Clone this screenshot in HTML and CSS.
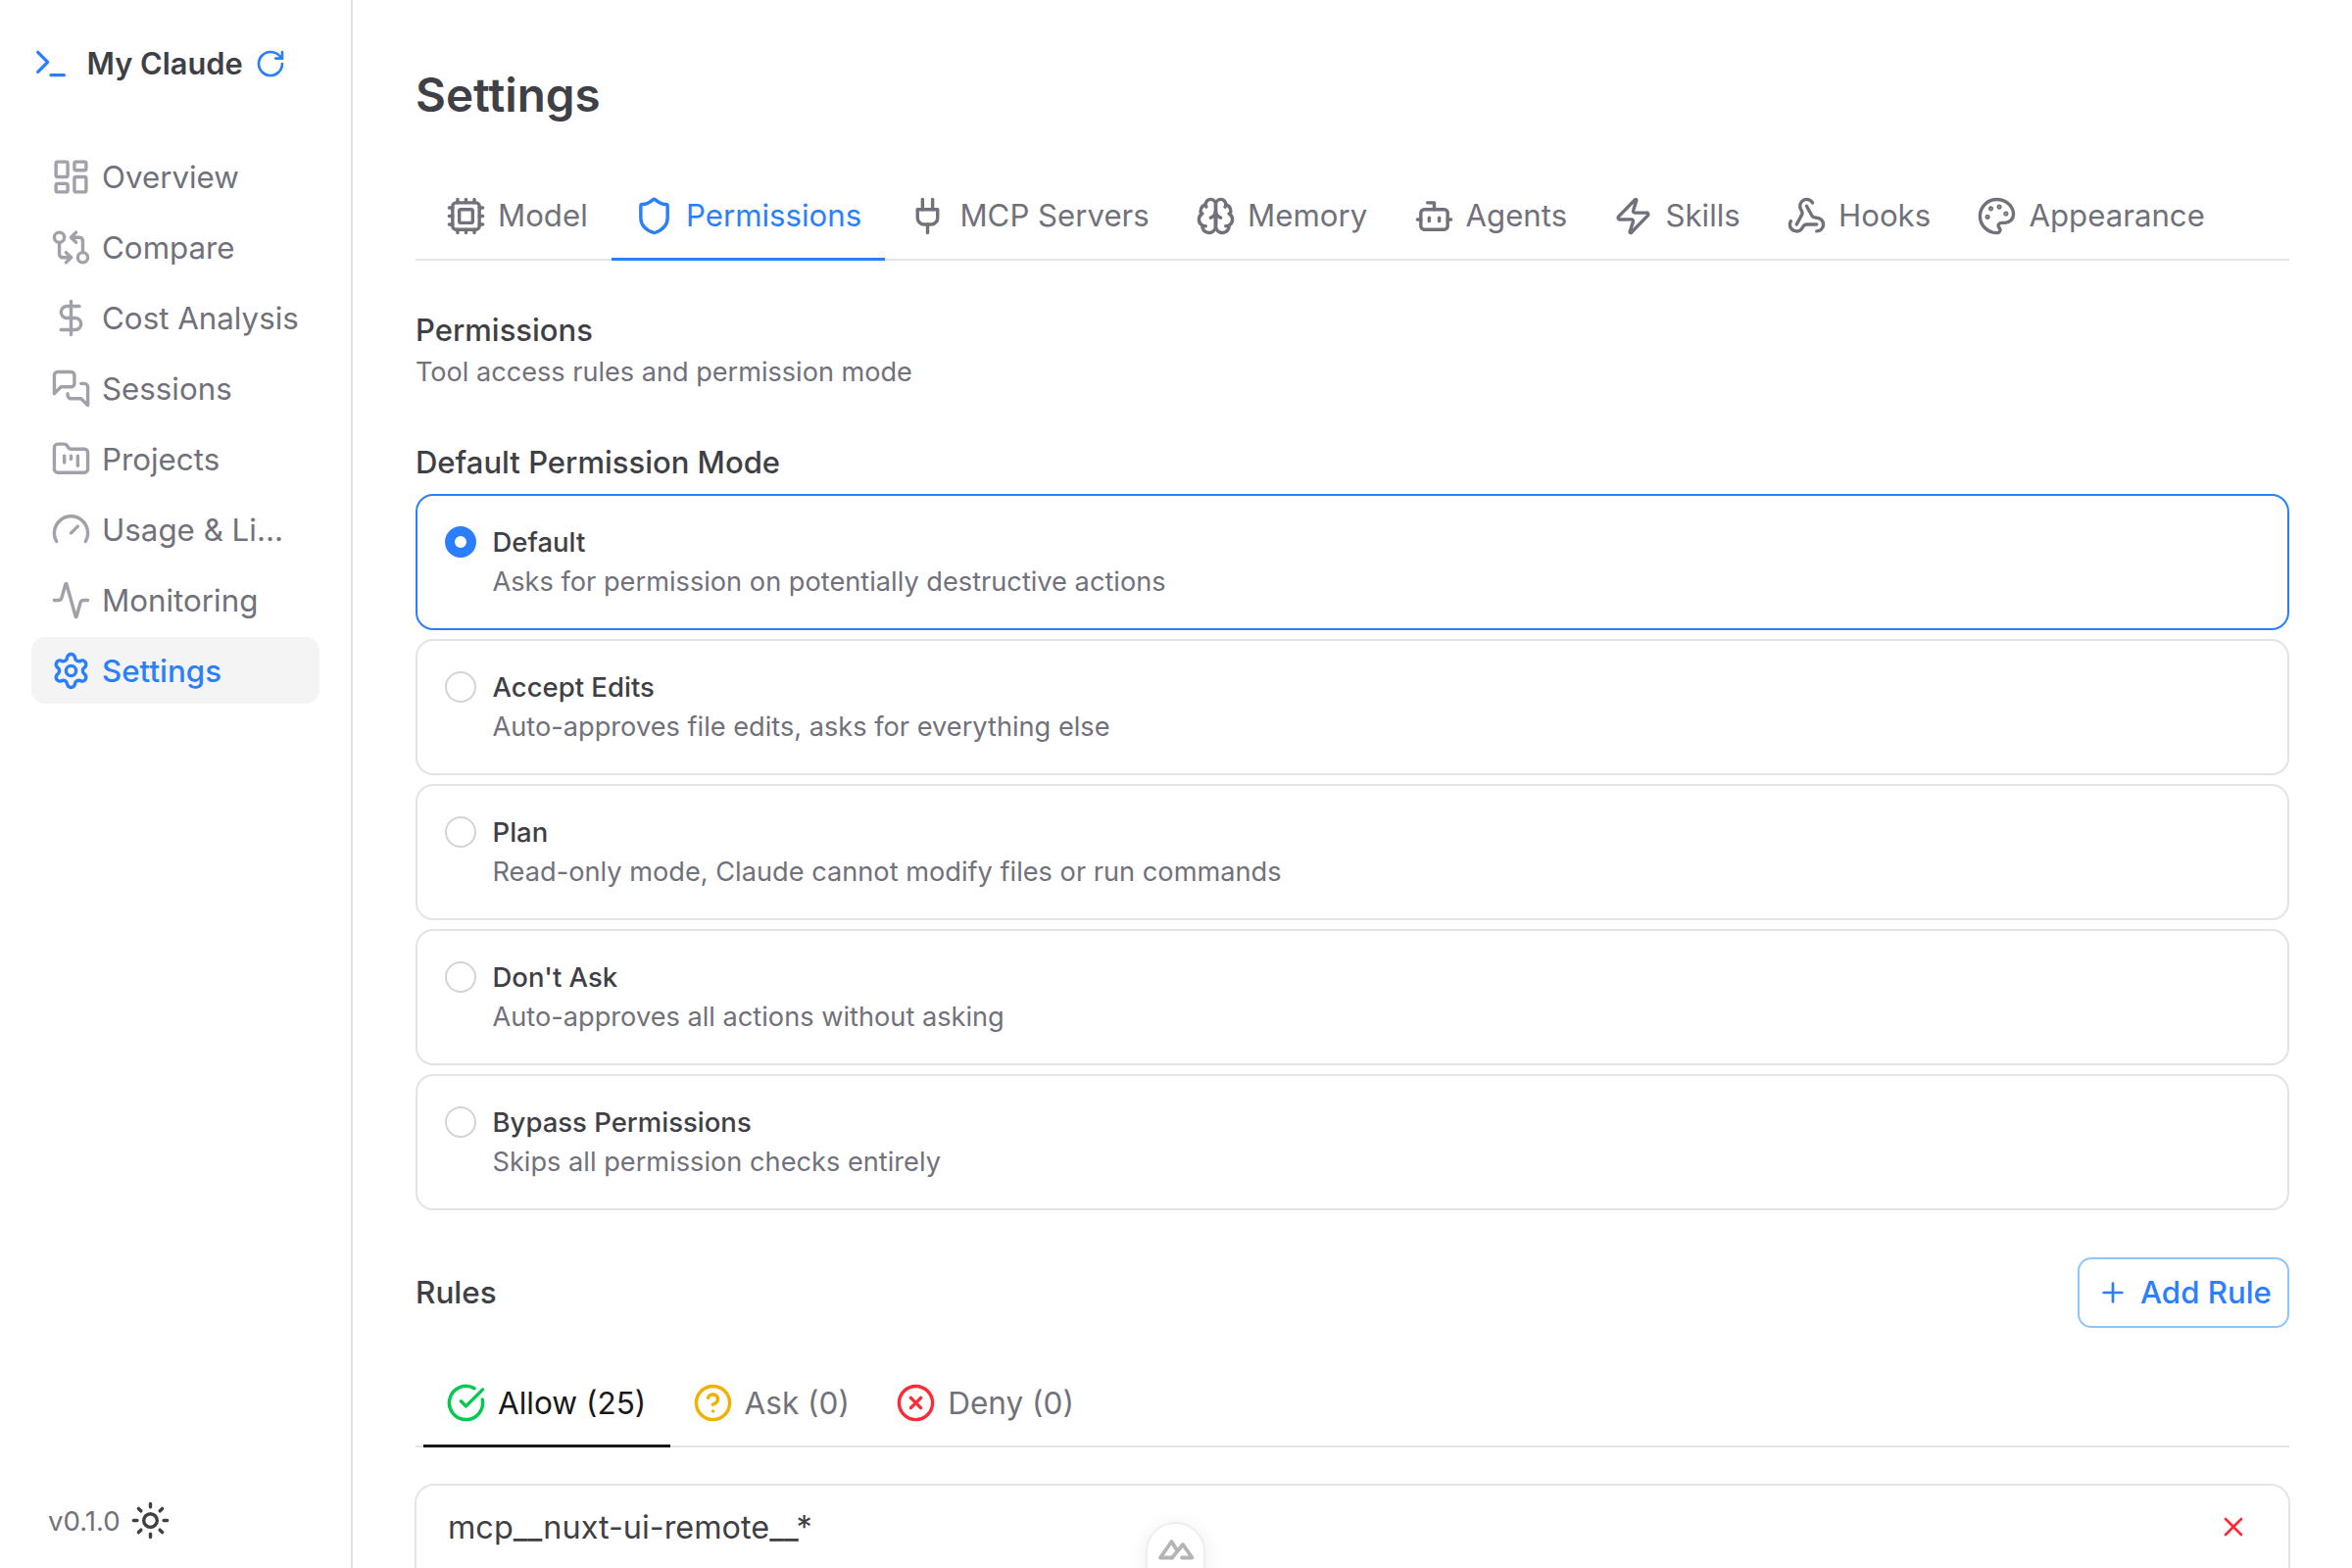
FILE: index.html
```html
<!DOCTYPE html>
<html lang="en">
<head>
<meta charset="utf-8">
<title>My Claude – Settings</title>
<link rel="stylesheet" href="styles.css">
</head>
<body>
<svg class="sprite" xmlns="http://www.w3.org/2000/svg">
  <symbol id="i-terminal" viewBox="0 0 24 24"><path d="M12 19h8"/><path d="m4 17 6-6-6-6"/></symbol>
  <symbol id="i-refresh" viewBox="0 0 24 24"><path d="M21 12a9 9 0 1 1-9-9c2.52 0 4.93 1 6.74 2.74L21 8"/><path d="M21 3v5h-5"/></symbol>
  <symbol id="i-overview" viewBox="0 0 24 24"><rect x="3" y="3" width="7" height="9" rx="1"/><rect x="14" y="3" width="7" height="5" rx="1"/><rect x="14" y="12" width="7" height="9" rx="1"/><rect x="3" y="16" width="7" height="5" rx="1"/></symbol>
  <symbol id="i-compare" viewBox="0 0 24 24"><circle cx="5" cy="6" r="3"/><path d="M12 6h5a2 2 0 0 1 2 2v7"/><path d="m15 9-3-3 3-3"/><circle cx="19" cy="18" r="3"/><path d="M12 18H7a2 2 0 0 1-2-2V9"/><path d="m9 15 3 3-3 3"/></symbol>
  <symbol id="i-dollar" viewBox="0 0 24 24"><line x1="12" x2="12" y1="2" y2="22"/><path d="M17 5H9.5a3.5 3.5 0 0 0 0 7h5a3.5 3.5 0 0 1 0 7H6"/></symbol>
  <symbol id="i-sessions" viewBox="0 0 24 24"><path d="M14 9a2 2 0 0 1-2 2H6l-4 4V4a2 2 0 0 1 2-2h8a2 2 0 0 1 2 2z"/><path d="M18 9h2a2 2 0 0 1 2 2v11l-4-4h-6a2 2 0 0 1-2-2v-1"/></symbol>
  <symbol id="i-projects" viewBox="0 0 24 24"><path d="M4 20h16a2 2 0 0 0 2-2V8a2 2 0 0 0-2-2h-7.93a2 2 0 0 1-1.66-.9l-.82-1.2A2 2 0 0 0 7.93 3H4a2 2 0 0 0-2 2v13c0 1.1.9 2 2 2Z"/><path d="M8 10v4"/><path d="M12 10v2"/><path d="M16 10v6"/></symbol>
  <symbol id="i-gauge" viewBox="0 0 24 24"><path d="m12 14 4-4"/><path d="M3.34 19a10 10 0 1 1 17.32 0"/></symbol>
  <symbol id="i-activity" viewBox="0 0 24 24"><path d="M22 12h-2.48a2 2 0 0 0-1.93 1.46l-2.35 8.36a.25.25 0 0 1-.48 0L9.24 2.18a.25.25 0 0 0-.48 0l-2.35 8.36A2 2 0 0 1 4.49 12H2"/></symbol>
  <symbol id="i-settings" viewBox="0 0 24 24"><path d="M9.671 4.136a2.34 2.34 0 0 1 4.659 0 2.34 2.34 0 0 0 3.319 1.915 2.34 2.34 0 0 1 2.33 4.033 2.34 2.34 0 0 0 0 3.831 2.34 2.34 0 0 1-2.33 4.033 2.34 2.34 0 0 0-3.319 1.915 2.34 2.34 0 0 1-4.659 0 2.34 2.34 0 0 0-3.32-1.915 2.34 2.34 0 0 1-2.33-4.033 2.34 2.34 0 0 0 0-3.831A2.34 2.34 0 0 1 6.35 6.051a2.34 2.34 0 0 0 3.319-1.915"/><circle cx="12" cy="12" r="3"/></symbol>
  <symbol id="i-sun" viewBox="0 0 24 24"><circle cx="12" cy="12" r="4"/><path d="M12 2v2"/><path d="M12 20v2"/><path d="m4.93 4.93 1.41 1.41"/><path d="m17.66 17.66 1.41 1.41"/><path d="M2 12h2"/><path d="M20 12h2"/><path d="m6.34 17.66-1.41 1.41"/><path d="m19.07 4.93-1.41 1.41"/></symbol>
  <symbol id="i-cpu" viewBox="0 0 24 24"><path d="M12 20v2"/><path d="M12 2v2"/><path d="M17 20v2"/><path d="M17 2v2"/><path d="M2 12h2"/><path d="M2 17h2"/><path d="M2 7h2"/><path d="M20 12h2"/><path d="M20 17h2"/><path d="M20 7h2"/><path d="M7 20v2"/><path d="M7 2v2"/><rect x="4" y="4" width="16" height="16" rx="2"/><rect x="8" y="8" width="8" height="8" rx="1"/></symbol>
  <symbol id="i-shield" viewBox="0 0 24 24"><path d="M20 13c0 5-3.5 7.5-7.66 8.95a1 1 0 0 1-.67-.01C7.5 20.5 4 18 4 13V6a1 1 0 0 1 1-1c2 0 4.5-1.2 6.24-2.72a1.17 1.17 0 0 1 1.52 0C14.51 3.81 17 5 19 5a1 1 0 0 1 1 1z"/></symbol>
  <symbol id="i-plug" viewBox="0 0 24 24"><path d="M12 22v-5"/><path d="M9 8V2"/><path d="M15 8V2"/><path d="M18 8v5a4 4 0 0 1-4 4h-4a4 4 0 0 1-4-4V8Z"/></symbol>
  <symbol id="i-brain" viewBox="0 0 24 24"><path d="M12 5a3 3 0 1 0-5.997.125 4 4 0 0 0-2.526 5.77 4 4 0 0 0 .556 6.588A4 4 0 1 0 12 18Z"/><path d="M12 5a3 3 0 1 1 5.997.125 4 4 0 0 1 2.526 5.77 4 4 0 0 1-.556 6.588A4 4 0 1 1 12 18Z"/><path d="M15 13a4.5 4.5 0 0 1-3-4 4.5 4.500 0 0 1-3 4"/><path d="M12 13v5"/><path d="M17.599 6.5a3 3 0 0 0 .399-1.375"/><path d="M6.003 5.125A3 3 0 0 0 6.401 6.5"/><path d="M3.477 10.896a4 4 0 0 1 .585-.396"/><path d="M19.938 10.5a4 4 0 0 1 .585.396"/><path d="M6 18a4 4 0 0 1-1.967-.516"/><path d="M19.967 17.484A4 4 0 0 1 18 18"/></symbol>
  <symbol id="i-bot" viewBox="0 0 24 24"><path d="M12 8V4H8"/><rect x="4" y="8" width="16" height="12" rx="2"/><path d="M2 14h2"/><path d="M20 14h2"/><path d="M15 13v2"/><path d="M9 13v2"/></symbol>
  <symbol id="i-zap" viewBox="0 0 24 24"><path d="M4 14a1 1 0 0 1-.78-1.63l9.9-10.2a.5.5 0 0 1 .86.46l-1.92 6.02A1 1 0 0 0 13 10h7a1 1 0 0 1 .78 1.63l-9.9 10.2a.5.5 0 0 1-.86-.46l1.92-6.02A1 1 0 0 0 11 14z"/></symbol>
  <symbol id="i-webhook" viewBox="0 0 24 24"><path d="M18 16.98h-5.99c-1.1 0-1.95.94-2.48 1.9A4 4 0 0 1 2 17c.01-.7.2-1.4.57-2"/><path d="m6 17 3.13-5.78c.53-.97.1-2.18-.5-3.1a4 4 0 1 1 6.89-4.06"/><path d="m12 6 3.13 5.73C15.66 12.7 16.9 13 18 13a4 4 0 0 1 0 8"/></symbol>
  <symbol id="i-palette" viewBox="0 0 24 24"><path d="M12 22a1 1 0 0 1 0-20 10 9 0 0 1 10 9 5 5 0 0 1-5 5h-2.25a1.75 1.75 0 0 0-1.4 2.8l.3.4a1.75 1.75 0 0 1-1.4 2.8z"/><circle cx="13.5" cy="6.5" r=".5" fill="currentColor"/><circle cx="17.5" cy="10.5" r=".5" fill="currentColor"/><circle cx="6.5" cy="12.5" r=".5" fill="currentColor"/><circle cx="8.5" cy="7.5" r=".5" fill="currentColor"/></symbol>
  <symbol id="i-plus" viewBox="0 0 24 24"><path d="M5 12h14"/><path d="M12 5v14"/></symbol>
  <symbol id="i-x" viewBox="0 0 24 24"><path d="M18 6 6 18"/><path d="m6 6 12 12"/></symbol>
  <symbol id="i-check" viewBox="0 0 24 24"><path d="M21.801 10A10 10 0 1 1 17 3.335"/><path d="m9 11 3 3L22 4"/></symbol>
  <symbol id="i-help" viewBox="0 0 24 24"><circle cx="12" cy="12" r="10"/><path d="M9.09 9a3 3 0 0 1 5.83 1c0 2-3 3-3 3"/><path d="M12 17h.01"/></symbol>
  <symbol id="i-xcircle" viewBox="0 0 24 24"><circle cx="12" cy="12" r="10"/><path d="m15 9-6 6"/><path d="m9 9 6 6"/></symbol>
</svg>

<div class="app">
  <aside class="sidebar">
    <div class="brand">
      <svg class="icon icon-brand"><use href="#i-terminal"/></svg>
      <span class="brand-name">My Claude</span>
      <svg class="icon icon-refresh"><use href="#i-refresh"/></svg>
    </div>
    <nav class="nav">
      <a class="nav-item"><svg class="icon"><use href="#i-overview"/></svg><span class="nav-label">Overview</span></a>
      <a class="nav-item"><svg class="icon"><use href="#i-compare"/></svg><span class="nav-label">Compare</span></a>
      <a class="nav-item"><svg class="icon"><use href="#i-dollar"/></svg><span class="nav-label">Cost Analysis</span></a>
      <a class="nav-item"><svg class="icon"><use href="#i-sessions"/></svg><span class="nav-label">Sessions</span></a>
      <a class="nav-item"><svg class="icon"><use href="#i-projects"/></svg><span class="nav-label">Projects</span></a>
      <a class="nav-item"><svg class="icon"><use href="#i-gauge"/></svg><span class="nav-label">Usage &amp; Limits</span></a>
      <a class="nav-item"><svg class="icon"><use href="#i-activity"/></svg><span class="nav-label">Monitoring</span></a>
      <a class="nav-item is-active"><svg class="icon"><use href="#i-settings"/></svg><span class="nav-label">Settings</span></a>
    </nav>
    <div class="sidebar-foot">
      <span class="version">v0.1.0</span>
      <svg class="icon icon-sun"><use href="#i-sun"/></svg>
    </div>
  </aside>

  <main class="main">
    <h1 class="page-title">Settings</h1>

    <div class="tabs">
      <a class="tab"><svg class="icon"><use href="#i-cpu"/></svg>Model</a>
      <a class="tab is-active"><svg class="icon"><use href="#i-shield"/></svg>Permissions</a>
      <a class="tab"><svg class="icon"><use href="#i-plug"/></svg>MCP Servers</a>
      <a class="tab"><svg class="icon"><use href="#i-brain"/></svg>Memory</a>
      <a class="tab"><svg class="icon"><use href="#i-bot"/></svg>Agents</a>
      <a class="tab"><svg class="icon"><use href="#i-zap"/></svg>Skills</a>
      <a class="tab"><svg class="icon"><use href="#i-webhook"/></svg>Hooks</a>
      <a class="tab"><svg class="icon"><use href="#i-palette"/></svg>Appearance</a>
    </div>

    <h2 class="section-title">Permissions</h2>
    <p class="section-sub">Tool access rules and permission mode</p>

    <h3 class="group-title">Default Permission Mode</h3>
    <div class="modes">
      <label class="mode is-selected"><span class="radio"></span><span class="mode-text"><span class="mode-name">Default</span><span class="mode-desc">Asks for permission on potentially destructive actions</span></span></label>
      <label class="mode"><span class="radio"></span><span class="mode-text"><span class="mode-name">Accept Edits</span><span class="mode-desc">Auto-approves file edits, asks for everything else</span></span></label>
      <label class="mode"><span class="radio"></span><span class="mode-text"><span class="mode-name">Plan</span><span class="mode-desc">Read-only mode, Claude cannot modify files or run commands</span></span></label>
      <label class="mode"><span class="radio"></span><span class="mode-text"><span class="mode-name">Don't Ask</span><span class="mode-desc">Auto-approves all actions without asking</span></span></label>
      <label class="mode"><span class="radio"></span><span class="mode-text"><span class="mode-name">Bypass Permissions</span><span class="mode-desc">Skips all permission checks entirely</span></span></label>
    </div>

    <div class="rules-head">
      <h3 class="rules-title">Rules</h3>
      <button class="add-btn"><svg class="icon"><use href="#i-plus"/></svg>Add Rule</button>
    </div>

    <div class="tabs subtabs">
      <a class="tab is-current"><svg class="icon icon-green"><use href="#i-check"/></svg>Allow (25)</a>
      <a class="tab"><svg class="icon icon-yellow"><use href="#i-help"/></svg>Ask (0)</a>
      <a class="tab"><svg class="icon icon-red"><use href="#i-xcircle"/></svg>Deny (0)</a>
    </div>

    <div class="rule">
      <span class="rule-text">mcp__nuxt-ui-remote__*</span>
      <svg class="icon icon-red icon-x"><use href="#i-x"/></svg>
    </div>
  </main>

  <button class="devtools" aria-label="Nuxt DevTools">
    <svg class="devtools-logo" viewBox="0 0 40 28"><path d="M16 21.500H4L15.500 5 20 12.500"/><path d="M16 21.500 27 8 36.500 21.500H26"/></svg>
  </button>
</div>
</body>
</html>
```

FILE: styles.css
```css
* { box-sizing: border-box; }
html, body { margin: 0; padding: 0; height: 1600px; background: #fff; overflow: hidden; }
body { font-family: Inter, "Liberation Sans", sans-serif; color: #3f3f46; }
.sprite { display: none; }

.icon {
  width: 41px; height: 41px; flex: none;
  fill: none; stroke: currentColor; stroke-width: 2; stroke-linecap: round; stroke-linejoin: round;
}

.app { display: flex; height: 1600px; position: relative; overflow: hidden; }

/* Sidebar */
.sidebar {
  width: 360px; flex: none; height: 100%;
  border-right: 2px solid #e4e4e7;
  padding: 45px 32px 0;
  display: flex; flex-direction: column;
}
.brand { display: flex; align-items: center; height: 40px; }
.icon-brand { width: 40px; height: 40px; color: #2b7fff; margin-right: 16.5px; }
.brand-name { font-size: 30.8px; font-weight: 600; color: #3f3f46; line-height: 40px; }
.icon-refresh { width: 32px; height: 32px; color: #2b7fff; margin-left: 12px; }

.nav { display: flex; flex-direction: column; gap: 4px; margin-top: 61px; }
.nav-item {
  display: flex; align-items: center; gap: 11px;
  height: 68px; padding: 0 18px 0 20px;
  border-radius: 14px;
  font-size: 31.3px; line-height: 40px; color: #71717b;
}
.nav-item .icon { color: #a1a1aa; }
.nav-label { white-space: nowrap; overflow: hidden; text-overflow: ellipsis; min-width: 0; padding-top: 1px; }
.nav-item.is-active { background: #f4f4f5; color: #2b7fff; font-weight: 500; }
.nav-item.is-active .icon { color: #2b7fff; }

.sidebar-foot { margin-top: auto; padding: 0 0 28px 17px; display: flex; align-items: center; gap: 10px; }
.version { font-size: 27.6px; color: #71717b; }
.icon-sun { color: #3f3f46; }

/* Main */
.main { flex: 1; min-width: 0; padding: 67px 64px 0; }
.page-title { margin: 0; font-size: 47.6px; line-height: 60px; font-weight: 600; color: #3f3f46; }

.tabs { display: flex; padding: 0 8px; margin-top: 48px; border-bottom: 2px solid #e4e4e7; }
.tab {
  display: flex; align-items: center; gap: 12px;
  height: 91px; padding: 2px 24.3px 0 23px; margin-bottom: -2px;
  border-bottom: 3px solid transparent;
  font-size: 31.2px; color: #71717b; white-space: nowrap;
}
.tab.is-active { color: #2b7fff; border-bottom-color: #2b7fff; }
.tab.is-current { color: #18181b; border-bottom-color: #18181b; }

.section-title { margin: 51px 0 0; font-size: 31px; line-height: 40px; font-weight: 500; }
.section-sub { margin: 3px 0 0; font-size: 27.1px; line-height: 40px; color: #71717b; }
.group-title { margin: 52px 0 0; font-size: 31px; line-height: 40px; font-weight: 500; }

.modes { display: flex; flex-direction: column; gap: 9px; margin-top: 12px; }
.mode {
  display: flex; align-items: flex-start; gap: 16.5px;
  height: 139px; padding: 27px 28px 0;
  border: 2px solid #e4e4e7; border-radius: 18px;
}
.mode.is-selected { border-color: #2b7fff; }
.radio { width: 32px; height: 32px; margin-top: 4px; flex: none; border-radius: 50%; border: 2px solid #d4d4d8; background: #fff; }
.is-selected .radio { border: 10px solid #2b7fff; }
.mode-text { display: flex; flex-direction: column; }
.mode-name { font-size: 27.5px; line-height: 40px; font-weight: 500; color: #3f3f46; }
.mode-desc { font-size: 27.2px; line-height: 40px; margin-top: 1px; color: #71717b; }

.rules-head { display: flex; align-items: center; justify-content: space-between; margin-top: 48px; }
.rules-title { margin: 0; font-size: 31.5px; line-height: 40px; font-weight: 500; }
.add-btn {
  display: flex; align-items: center; gap: 12.5px; white-space: nowrap;
  height: 72px; width: 216px; padding: 0 0 0 17.5px;
  background: #fff; border: 2px solid #8ec5ff; border-radius: 14px;
  font: 500 31.2px Inter, "Liberation Sans", sans-serif; color: #2b7fff;
}
.add-btn .icon { width: 32px; height: 32px; }

.subtabs { margin-top: 32px; }
.subtabs .tab { height: 90px; font-size: 31.5px; }
.icon-green { color: #00c950; }
.icon-yellow { color: #f0b100; }
.icon-red { color: #fb2c36; }

.rule {
  display: flex; align-items: center; justify-content: space-between;
  height: 200px; margin: 37px -1px 0; padding: 0 40px 112px 32px;
  border: 2px solid #e4e4e7; border-radius: 20px;
}
.rule-text { font-size: 32.4px; color: #3f3f46; }
.icon-x { width: 32px; height: 32px; }

/* Floating DevTools pill lying over the page */
.devtools {
  position: absolute; left: 1169px; top: 1553px;
  width: 61px; height: 90px; padding: 13px 0 0;
  display: flex; justify-content: center; align-items: flex-start;
  background: #fff; border: 2px solid #eee; border-radius: 31px;
  box-shadow: 0 4px 20px rgba(0,0,0,.08);
}
.devtools-logo { width: 40px; height: 28px; flex: none; fill: none; stroke: #b5b5b5; stroke-width: 3.8; stroke-linejoin: round; stroke-linecap: round; }
```
